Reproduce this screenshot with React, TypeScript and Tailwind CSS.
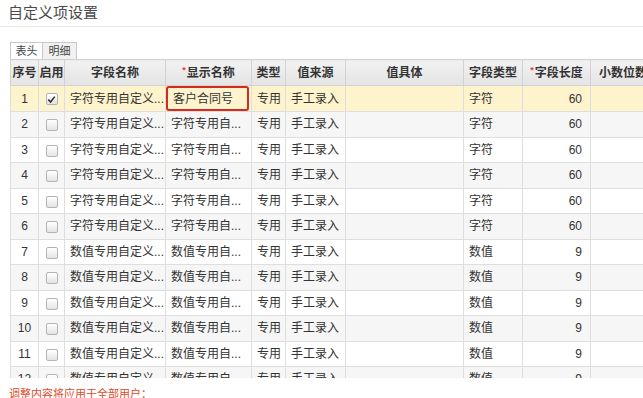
import React from 'react';

interface Row {
    no: number;
    checked: boolean;
    name: string;
    display: string;
    dataType: string;
    len: number;
}

const rows: Row[] = [
    { no: 1, checked: true, name: '字符专用自定义...', display: '客户合同号', dataType: '字符', len: 60 },
    ...[2, 3, 4, 5, 6].map(n => ({ no: n, checked: false, name: '字符专用自定义...', display: '字符专用自...', dataType: '字符', len: 60 })),
    ...[7, 8, 9, 10, 11, 12].map(n => ({ no: n, checked: false, name: '数值专用自定义...', display: '数值专用自...', dataType: '数值', len: 9 })),
];

const Checkbox = ({ checked }: { checked: boolean }) => (
    <span className="inline-flex items-center justify-center w-[12px] h-[12px] border border-[#b4b4b4] rounded-[2px] bg-gradient-to-b from-white to-[#e4e4e4] align-middle">
        {checked && (
            <svg width="9" height="9" viewBox="0 0 10 10">
                <path d="M1.5 5.2 L4 7.8 L8.6 1.8" fill="none" stroke="#333" strokeWidth="1.8" />
            </svg>
        )}
    </span>
);

const Req = () => <span className="text-[#e23b3b] text-[9px] align-top mr-[1px]">*</span>;

const th = "h-[26px] border border-[#d2d2d2] bg-gradient-to-b from-[#f2f2f2] to-[#e4e4e4] font-bold text-[#333] text-center whitespace-nowrap overflow-hidden";
const td = "h-[25.5px] border border-[#dedede] whitespace-nowrap overflow-hidden px-[5px]";

export default function App() {
    return (
        <div className="w-[643px] h-[398px] overflow-hidden bg-white text-[12px] text-[#333]" style={{ fontFamily: '"Liberation Sans", "Noto Sans CJK SC", sans-serif' }}>
            <div className="h-[27px] border-b border-[#e8e8e8] pl-[8px] pt-[3px] text-[15px] text-[#4a4a4a] leading-[20px]">
                自定义项设置
            </div>
            <div className="pl-[10px] pt-[15px] flex">
                <div className="h-[17px] w-[33px] border border-b-0 border-[#c8c8c8] bg-white flex items-center justify-center text-[11px] text-[#444]">表头</div>
                <div className="h-[17px] w-[34px] border border-l-0 border-b-0 border-[#c8c8c8] bg-[#f1f1f1] flex items-center justify-center text-[11px] text-[#444]">明细</div>
            </div>
            <div className="pl-[10px] h-[319px] overflow-hidden">
                <table className="table-fixed border-collapse w-[660px]">
                    <colgroup>
                        <col className="w-[28px]" />
                        <col className="w-[26px]" />
                        <col className="w-[101px]" />
                        <col className="w-[86px]" />
                        <col className="w-[34px]" />
                        <col className="w-[60px]" />
                        <col className="w-[118px]" />
                        <col className="w-[59px]" />
                        <col className="w-[68px]" />
                        <col className="w-[80px]" />
                    </colgroup>
                    <thead>
                        <tr>
                            <th className={th}>序号</th>
                            <th className={th}>启用</th>
                            <th className={th}>字段名称</th>
                            <th className={th}><Req />显示名称</th>
                            <th className={th}>类型</th>
                            <th className={th}>值来源</th>
                            <th className={th}>值具体</th>
                            <th className={th}>字段类型</th>
                            <th className={th}><Req />字段长度</th>
                            <th className={`${th} text-left pl-[8px]`}>小数位数</th>
                        </tr>
                    </thead>
                    <tbody>
                        {rows.map((r, i) => {
                            const bg = i === 0 ? 'bg-[#fdf3cd]' : i % 2 === 1 ? 'bg-[#f6f6f6]' : 'bg-white';
                            return (
                                <tr key={r.no} className={bg}>
                                    <td className={`${td} text-center`}>{r.no}</td>
                                    <td className={`${td} text-center`}><Checkbox checked={r.checked} /></td>
                                    <td className={td}>{r.name}</td>
                                    {i === 0 ? (
                                        <td className="h-[25.5px] border border-[#dedede] p-0">
                                            <div className="h-[25px] mr-[2px] border-2 border-[#d42a20] rounded-[3px] flex items-center pl-[5px] whitespace-nowrap">
                                                {r.display}
                                            </div>
                                        </td>
                                    ) : (
                                        <td className={td}>{r.display}</td>
                                    )}
                                    <td className={`${td} text-center`}>专用</td>
                                    <td className={td}>手工录入</td>
                                    <td className={td}></td>
                                    <td className={td}>{r.dataType}</td>
                                    <td className={`${td} text-right pr-[8px]`}>{r.len}</td>
                                    <td className={td}></td>
                                </tr>
                            );
                        })}
                    </tbody>
                </table>
            </div>
            <div className="pl-[9px] pt-[9px] text-[11px] text-[#e04a28] leading-[14px]">
                调整内容将应用于全部用户：
            </div>
        </div>
    );
}
